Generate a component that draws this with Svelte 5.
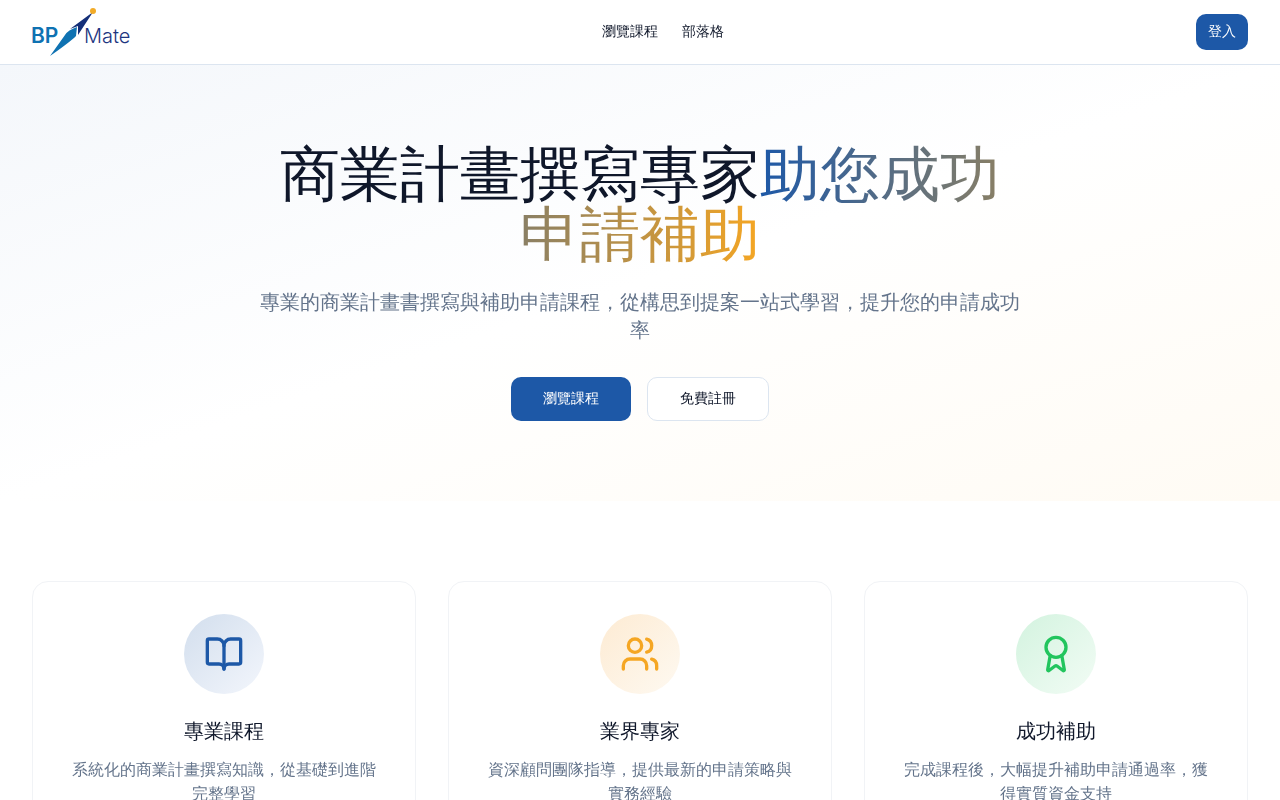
<script>
  const links = [
    { href: '/courses', label: '瀏覽課程' },
    { href: '/blog', label: '部落格' },
  ];

  const features = [
    {
      tone: 'blue',
      title: '專業課程',
      text: '系統化的商業計畫撰寫知識，從基礎到進階完整學習',
    },
    {
      tone: 'amber',
      title: '業界專家',
      text: '資深顧問團隊指導，提供最新的申請策略與實務經驗',
    },
    {
      tone: 'green',
      title: '成功補助',
      text: '完成課程後，大幅提升補助申請通過率，獲得實質資金支持',
    },
  ];
</script>

<header class="topbar">
  <a class="brand" href="/" aria-label="BP Mate">
    <svg width="98" height="48" viewBox="0 0 98 48" aria-hidden="true">
      <text class="bp" x="-1" y="35">BP</text>
      <text class="mate" x="52" y="35">Mate</text>
      <path d="M18 48 L33 27 Q36 22 45 19 L44 28 Q38 34 18 48Z" fill="#0f72b2" />
      <path d="M61 4 L38 21 L46 18 L46 27Z" fill="#142f78" />
      <circle cx="61" cy="3" r="3" fill="#f2ab27" />
    </svg>
  </a>

  <nav>
    {#each links as link}
      <a href={link.href}>{link.label}</a>
    {/each}
  </nav>

  <button class="btn">登入</button>
</header>

<main>
  <section class="hero">
    <h1>商業計畫撰寫專家<span>助您成功申請補助</span></h1>
    <p>專業的商業計畫書撰寫與補助申請課程，從構思到提案一站式學習，提升您的申請成功率</p>
    <div class="actions">
      <a class="btn large" href="/courses">瀏覽課程</a>
      <a class="btn large outline" href="/register">免費註冊</a>
    </div>
  </section>

  <section class="features">
    {#each features as item}
      <article class="card">
        <div class="icon {item.tone}">
          <svg viewBox="0 0 24 24" aria-hidden="true">
            {#if item.tone === 'blue'}
              <path d="M12 7v14" />
              <path d="M3 18a1 1 0 0 1-1-1V4a1 1 0 0 1 1-1h5a4 4 0 0 1 4 4 4 4 0 0 1 4-4h5a1 1 0 0 1 1 1v13a1 1 0 0 1-1 1h-6a3 3 0 0 0-3 3 3 3 0 0 0-3-3z" />
            {:else if item.tone === 'amber'}
              <path d="M16 21v-2a4 4 0 0 0-4-4H6a4 4 0 0 0-4 4v2" />
              <circle cx="9" cy="7" r="4" />
              <path d="M22 21v-2a4 4 0 0 0-3-3.87" />
              <path d="M16 3.13a4 4 0 0 1 0 7.75" />
            {:else}
              <path d="m15.477 12.89 1.515 8.526a.5.5 0 0 1-.81.47l-3.58-2.687a1 1 0 0 0-1.197 0l-3.586 2.686a.5.5 0 0 1-.81-.469l1.514-8.526" />
              <circle cx="12" cy="8" r="6" />
            {/if}
          </svg>
        </div>
        <h3>{item.title}</h3>
        <p>{item.text}</p>
      </article>
    {/each}
  </section>
</main>

<style>
  :global(body) {
    margin: 0;
    background: #fff;
    color: #0f172a;
    font-family: 'WenQuanYi Zen Hei', 'Droid Sans Fallback', 'Noto Sans CJK TC', sans-serif;
    font-size: 16px;
    line-height: 24px;
  }

  .topbar {
    display: flex;
    align-items: center;
    justify-content: space-between;
    height: 64px;
    padding: 0 32px;
    background: #fff;
    border-bottom: 1px solid #dce5f0;
  }

  .brand svg {
    display: block;
    overflow: visible;
  }

  .brand text {
    font-family: Inter, sans-serif;
    font-size: 20px;
  }

  .brand .bp {
    fill: #0f72b2;
    font-size: 21px;
    font-weight: 600;
  }

  .mate {
    fill: #1d3580;
    font-weight: 300;
  }

  nav {
    display: flex;
    gap: 24px;
  }

  nav a {
    color: inherit;
    font-size: 14px;
    line-height: 20px;
    text-decoration: none;
  }

  .btn {
    display: inline-flex;
    align-items: center;
    justify-content: center;
    box-sizing: border-box;
    height: 36px;
    padding: 0 12px;
    border: 0;
    border-radius: 10px;
    background: #1d58a7;
    color: #fff;
    font-family: inherit;
    font-size: 14px;
    line-height: 20px;
    text-decoration: none;
    cursor: pointer;
  }

  .btn.large {
    height: 44px;
    padding: 0 32px;
  }

  .btn.outline {
    border: 1px solid #dce5f0;
    background: #fff;
    color: #0f172a;
  }

  .hero {
    padding: 80px 32px;
    text-align: center;
    background: linear-gradient(to bottom right, #f4f7fb, #fff 50%, #fffbf4);
  }

  h1 {
    max-width: 768px;
    margin: 0 auto 24px;
    font-size: 60px;
    font-weight: 400;
    line-height: 60px;
  }

  h1 span {
    background: linear-gradient(to right, #1d58a7, #f5a623);
    background-clip: text;
    color: transparent;
  }

  .hero p {
    max-width: 768px;
    margin: 0 auto 32px;
    color: #64748b;
    font-size: 20px;
    line-height: 28px;
  }

  .actions {
    display: flex;
    justify-content: center;
    gap: 16px;
  }

  .features {
    display: grid;
    grid-template-columns: repeat(3, 1fr);
    gap: 32px;
    padding: 80px 32px;
  }

  .card {
    padding: 32px;
    border: 1px solid #f1f3f6;
    border-radius: 16px;
    background: #fff;
    text-align: center;
  }

  .icon {
    display: flex;
    align-items: center;
    justify-content: center;
    width: 80px;
    height: 80px;
    margin: 0 auto 24px;
    border-radius: 50%;
  }

  .icon svg {
    width: 40px;
    height: 40px;
    fill: none;
    stroke: currentColor;
    stroke-width: 2;
    stroke-linecap: round;
    stroke-linejoin: round;
  }

  .blue {
    color: #1d58a7;
    background: linear-gradient(to bottom right, #d2deed, #f3f6fc);
  }

  .amber {
    color: #f5a623;
    background: linear-gradient(to bottom right, #fdebd3, #fef9f1);
  }

  .green {
    color: #22c55e;
    background: linear-gradient(to bottom right, #d3f3df, #f2fcf5);
  }

  h3 {
    margin: 0 0 12px;
    font-size: 20px;
    font-weight: 400;
    line-height: 28px;
  }

  .card p {
    margin: 0;
    color: #64748b;
  }

  @media (max-width: 768px) {
    .features {
      grid-template-columns: 1fr;
    }

    h1 {
      font-size: 36px;
      line-height: 40px;
    }
  }
</style>
